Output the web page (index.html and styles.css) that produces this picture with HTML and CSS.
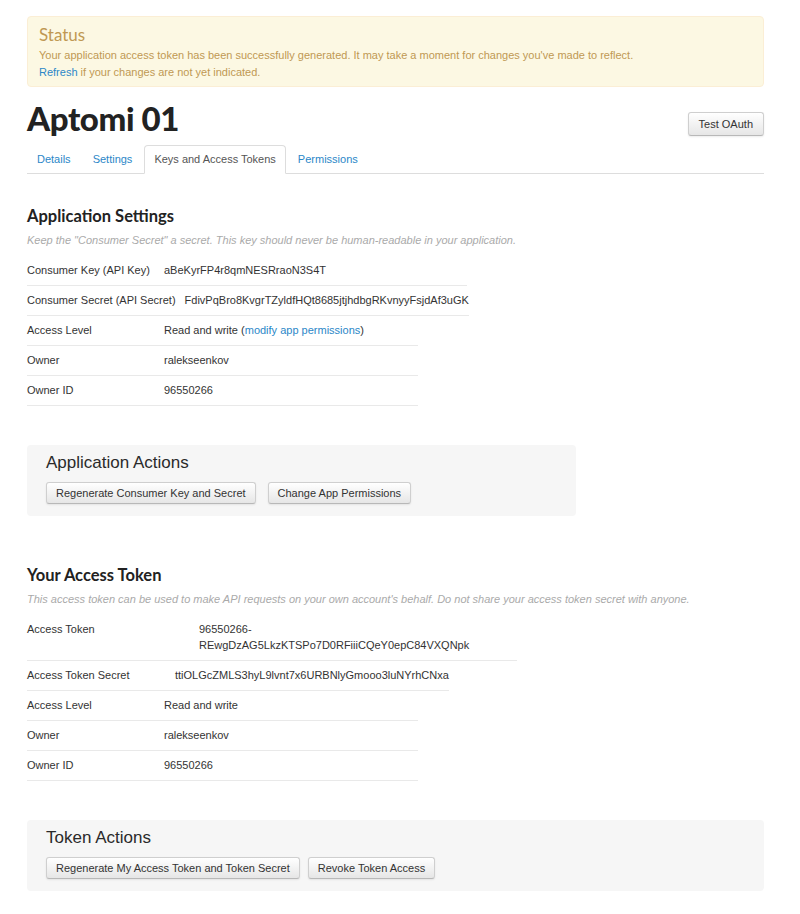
FILE: index.html
```html
<!DOCTYPE html>
<html>
<head>
<meta charset="utf-8">
<link rel="stylesheet" href="styles.css">
</head>
<body>
<div class="page">
  <div class="alert">
    <h4 class="alert-title">Status</h4>
    <p class="alert-text">Your application access token has been successfully generated. It may take a moment for changes you've made to reflect.<br><a href="#" class="link">Refresh</a> if your changes are not yet indicated.</p>
  </div>

  <div class="app-header">
    <h1 class="app-title">Aptomi 01</h1>
    <button class="btn btn-oauth">Test OAuth</button>
  </div>

  <ul class="tabs">
    <li class="tab"><a href="#" class="tab-link">Details</a></li>
    <li class="tab"><a href="#" class="tab-link">Settings</a></li>
    <li class="tab tab-active"><a href="#" class="tab-link">Keys and Access Tokens</a></li>
    <li class="tab"><a href="#" class="tab-link">Permissions</a></li>
  </ul>

  <section class="section section-first">
    <h2 class="section-title">Application Settings</h2>
    <p class="section-desc">Keep the "Consumer Secret" a secret. This key should never be human-readable in your application.</p>
    <div class="kv">
      <div class="kv-row kv-row-wide"><span class="kv-label">Consumer Key (API Key)</span><span class="kv-value">aBeKyrFP4r8qmNESRraoN3S4T</span></div>
      <div class="kv-row kv-row-wide"><span class="kv-label kv-label-auto">Consumer Secret (API Secret)</span><span class="kv-value">FdivPqBro8KvgrTZyldfHQt8685jtjhdbgRKvnyyFsjdAf3uGK</span></div>
      <div class="kv-row"><span class="kv-label">Access Level</span><span class="kv-value">Read and write (<a href="#" class="link">modify app permissions</a>)</span></div>
      <div class="kv-row"><span class="kv-label">Owner</span><span class="kv-value">ralekseenkov</span></div>
      <div class="kv-row"><span class="kv-label">Owner ID</span><span class="kv-value">96550266</span></div>
    </div>
  </section>

  <div class="actions actions-narrow">
    <h3 class="actions-title">Application Actions</h3>
    <div class="actions-buttons">
      <button class="btn">Regenerate Consumer Key and Secret</button>
      <button class="btn">Change App Permissions</button>
    </div>
  </div>

  <section class="section section-token">
    <h2 class="section-title">Your Access Token</h2>
    <p class="section-desc">This access token can be used to make API requests on your own account's behalf. Do not share your access token secret with anyone.</p>
    <div class="kv">
      <div class="kv-row"><span class="kv-label kv-label-token">Access Token</span><span class="kv-value kv-value-token">96550266-<br>REwgDzAG5LkzKTSPo7D0RFiiiCQeY0epC84VXQNpk</span></div>
      <div class="kv-row"><span class="kv-label kv-label-secret">Access Token Secret</span><span class="kv-value">ttiOLGcZMLS3hyL9lvnt7x6URBNlyGmooo3luNYrhCNxa</span></div>
      <div class="kv-row"><span class="kv-label">Access Level</span><span class="kv-value">Read and write</span></div>
      <div class="kv-row"><span class="kv-label">Owner</span><span class="kv-value">ralekseenkov</span></div>
      <div class="kv-row"><span class="kv-label">Owner ID</span><span class="kv-value">96550266</span></div>
    </div>
  </section>

  <div class="actions">
    <h3 class="actions-title">Token Actions</h3>
    <div class="actions-buttons actions-buttons-tight">
      <button class="btn">Regenerate My Access Token and Token Secret</button>
      <button class="btn">Revoke Token Access</button>
    </div>
  </div>
</div>
</body>
</html>
```

FILE: styles.css
```css
* { box-sizing: border-box; }
html, body { margin: 0; padding: 0; background: #fff; }
body {
  font-family: "Liberation Sans", Arial, sans-serif;
  font-size: 11px;
  color: #333;
}
.page {
  width: 737px;
  margin-left: 27px;
  padding-top: 16px;
  padding-bottom: 23px;
}
.link { color: #2b87c8; text-decoration: none; }

.alert {
  background: #fcf8e3;
  border: 1px solid #fbeed5;
  border-radius: 4px;
  padding: 8px 11px 5px;
  color: #c09853;
}
.alert-title {
  margin: 0 0 2px;
  font-family: "Lato", "Liberation Sans", sans-serif;
  font-weight: 400;
  font-size: 17px;
  line-height: 20px;
}
.alert-text { margin: 0; line-height: 17px; }

.app-header {
  display: flex;
  justify-content: space-between;
  align-items: flex-start;
  margin-top: 11px;
}
.app-title {
  margin: 0;
  font-family: "Lato", "Liberation Sans", sans-serif;
  font-weight: 900;
  font-size: 33px;
  letter-spacing: -0.4px;
  line-height: 40px;
  color: #222;
}
.btn {
  font-family: "Liberation Sans", Arial, sans-serif;
  font-size: 11px;
  color: #333;
  height: 22px;
  padding: 0 9px;
  background: linear-gradient(#ffffff, #e6e6e6);
  border: 1px solid #cfcfcf;
  border-bottom-color: #b8b8b8;
  border-radius: 3px;
  box-shadow: 0 1px 2px rgba(0,0,0,0.08);
}
.btn-oauth { margin-top: 14px; height: 24px; padding: 0 10px; }

.tabs {
  list-style: none;
  margin: 7px 0 0;
  padding: 0;
  display: flex;
  gap: 2px;
  border-bottom: 1px solid #ddd;
}
.tab { margin-bottom: -1px; border: 1px solid transparent; border-radius: 4px 4px 0 0; }
.tab-link {
  display: block;
  padding: 6px 9px 7px;
  line-height: 14px;
  color: #2b87c8;
  text-decoration: none;
}
.tab-active { background: #fff; border-color: #ddd; border-bottom-color: #fff; }
.tab-active .tab-link { color: #555; }

.section-first { margin-top: 31px; }
.section-token { margin-top: 48px; }
.section-title {
  margin: 0;
  font-family: "Lato", "Liberation Sans", sans-serif;
  font-weight: 700;
  font-size: 16.5px;
  line-height: 22px;
  color: #222;
}
.section-desc {
  margin: 5px 0 8px;
  font-style: italic;
  font-size: 11px;
  line-height: 16px;
  color: #aaa;
}
.kv-row {
  display: flex;
  width: max-content;
  min-width: 391px;
  padding: 6px 0 7px;
  line-height: 16px;
  border-bottom: 1px solid #e9e9e9;
}
.kv-row-wide { min-width: 440px; }
.kv-label { width: 137px; flex-shrink: 0; }
.kv-label-auto { width: auto; padding-right: 9px; }
.kv-label-token { width: 172px; }
.kv-label-secret { width: 148px; }
.kv-value-token { width: 318px; }

.actions {
  margin-top: 39px;
  background: #f6f6f6;
  border-radius: 4px;
  padding: 8px 19px 12px;
}
.actions-narrow { width: 549px; }
.actions-title {
  margin: 0;
  font-family: "Liberation Sans", Arial, sans-serif;
  font-weight: 400;
  font-size: 17px;
  line-height: 20px;
  color: #2a2a2a;
}
.actions-buttons { display: flex; gap: 12px; margin-top: 9px; }
.actions-buttons-tight { gap: 8px; }
```
